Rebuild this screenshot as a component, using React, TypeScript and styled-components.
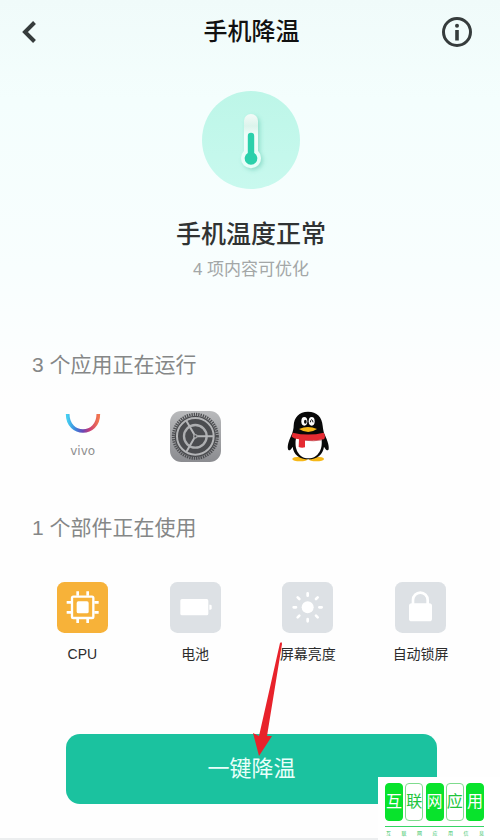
import React from "react";
import styled, { createGlobalStyle } from "styled-components";

const GlobalStyle = createGlobalStyle`
  * { box-sizing: border-box; }
  body {
    margin: 0;
    background: #fff;
    font-family: "Liberation Sans", "Noto Sans CJK SC", sans-serif;
  }
  h1, h2, p, ul { margin: 0; padding: 0; }
`;

const Page = styled.main`
  position: relative;
  min-height: 100vh;
  display: flex;
  flex-direction: column;
  background: linear-gradient(#f0fbfa 0, #f4fefd 100px, #f8fefe 270px, #fefefe 400px);
  border-bottom: 2px solid #eceeef;
`;

const Header = styled.header`
  display: grid;
  grid-template-columns: 32px 1fr 32px;
  align-items: center;
  height: 64px;
  padding: 0 27px 0 14px;
`;

const IconButton = styled.button`
  display: flex;
  align-items: center;
  justify-content: center;
  width: 32px;
  height: 32px;
  padding: 0;
  border: 0;
  background: none;
  color: #363c3c;
  cursor: pointer;
`;

const PageTitle = styled.h1`
  padding-left: 16px;
  font-size: 24px;
  line-height: 32px;
  font-weight: 500;
  text-align: center;
  color: #111;
`;

const Hero = styled.section`
  display: flex;
  flex-direction: column;
  align-items: center;
  padding: 27px 0 0 2px;
`;

const Status = styled.h2`
  margin-top: 27px;
  font-size: 25px;
  line-height: 36px;
  font-weight: 500;
  color: #303333;
`;

const Hint = styled.p`
  margin-top: 6px;
  font-size: 17px;
  line-height: 24px;
  color: #a3a7a7;
`;

const Section = styled.section<{ $top: number }>`
  margin-top: ${(p) => p.$top}px;
`;

const SectionTitle = styled.h2`
  padding-left: 32px;
  font-size: 21px;
  line-height: 30px;
  font-weight: 400;
  color: #858787;
`;

const Tiles = styled.ul<{ $top: number }>`
  display: grid;
  grid-template-columns: repeat(4, 1fr);
  margin-top: ${(p) => p.$top}px;
  padding: 0 23px 0 26px;
  list-style: none;
`;

const Tile = styled.li`
  display: flex;
  flex-direction: column;
  align-items: center;
`;

const TileIcon = styled.svg.attrs({ viewBox: "0 0 153 153" })`
  display: block;
  width: 51px;
  height: 51px;
`;

const TileLabel = styled.span`
  margin-top: 11px;
  font-size: 14px;
  line-height: 20px;
  color: #2c2c2c;
`;

const Action = styled.div`
  position: relative;
  display: flex;
  margin-top: 70px;
  padding: 0 63px 34px 66px;
`;

const CoolButton = styled.button`
  flex: 1;
  height: 70px;
  border: 0;
  border-radius: 14px;
  background: #1bc29f;
  color: #e9fffa;
  font-family: inherit;
  font-size: 22px;
  line-height: 32px;
  cursor: pointer;
`;

const Pointer = styled.svg`
  position: absolute;
  left: 50%;
  top: -93px;
  width: 40px;
  height: 116px;
  pointer-events: none;
`;

const Watermark = styled.aside`
  position: absolute;
  right: 0;
  bottom: -2px;
  width: 122px;
  height: 63px;
  padding: 6px 16px 0 7px;
  background: #fff;
  color: #08e32c;
`;

const Stamps = styled.div`
  display: flex;
  justify-content: space-between;
  padding-bottom: 5px;
  border-bottom: 1px solid #35d565;
`;

const Stamp = styled.span<{ $filled: boolean }>`
  display: flex;
  align-items: center;
  justify-content: center;
  width: 18px;
  height: 38px;
  border: 1px solid ${(p) => (p.$filled ? "#08e32c" : "#7fdc8e")};
  border-radius: 4px;
  background: ${(p) => (p.$filled ? "#08e32c" : "#fff")};
  color: ${(p) => (p.$filled ? "#fff" : "#20c43c")};
  font-size: 16px;
  line-height: 36px;
`;

const Caption = styled.div`
  display: flex;
  justify-content: space-between;
  padding: 2px 0 0 1px;
  font-size: 5px;
  line-height: 8px;
  color: #35c565;
`;

const Thermometer = () => (
  <svg width="98" height="98" viewBox="0 0 98 98" aria-hidden="true">
    <defs>
      <linearGradient id="disc" x1="0" y1="0" x2="0" y2="1">
        <stop offset="0" stopColor="#bdf6e8" />
        <stop offset="1" stopColor="#c8f9ee" />
      </linearGradient>
      <linearGradient id="glass" x1="0" y1="0" x2="0" y2="1">
        <stop offset="0" stopColor="#f4fbf8" />
        <stop offset="0.22" stopColor="#dcf4ec" />
        <stop offset="0.4" stopColor="#f1fdfa" />
        <stop offset="1" stopColor="#e6fff9" />
      </linearGradient>
      <filter id="soft" x="-50%" y="-30%" width="220%" height="170%">
        <feDropShadow dx="2" dy="2" stdDeviation="2" floodColor="#4fbfa5" floodOpacity="0.45" />
      </filter>
    </defs>
    <circle cx="49" cy="49" r="49" fill="url(#disc)" />
    <path
      d="M42 30a7 7 0 0 1 14 0v30a10 10 0 1 1-14 0z"
      fill="url(#glass)"
      filter="url(#soft)"
    />
    <path d="M45.800 45a3.200 3.200 0 0 1 6.400 0v17a6.300 6.300 0 1 1-6.400 0z" fill="#2bd0ab" />
  </svg>
);

const VivoIcon = () => (
  <TileIcon aria-label="vivo" role="img">
    <defs>
      <linearGradient id="smile" x1="0" y1="0" x2="1" y2="0">
        <stop offset="0" stopColor="#45cdf0" />
        <stop offset="0.25" stopColor="#3c86dc" />
        <stop offset="0.5" stopColor="#6a45b5" />
        <stop offset="0.72" stopColor="#c93f75" />
        <stop offset="1" stopColor="#f2744e" />
      </linearGradient>
    </defs>
    <path d="M32 9C32 77 124 77 124 9" fill="none" stroke="url(#smile)" strokeWidth="11" />
    <text x="77" y="132" textAnchor="middle" fontFamily="DejaVu Sans" fontSize="36" fill="#8e8e8e">
      vivo
    </text>
  </TileIcon>
);

const SettingsIcon = () => (
  <TileIcon aria-label="设置" role="img">
    <defs>
      <linearGradient id="metal" x1="0" y1="0" x2="0" y2="1">
        <stop offset="0" stopColor="#b9babc" />
        <stop offset="1" stopColor="#8b8c90" />
      </linearGradient>
    </defs>
    <rect width="153" height="153" rx="34" fill="url(#metal)" />
    <circle cx="76" cy="76" r="66" fill="none" stroke="#4d4e51" strokeWidth="9" strokeDasharray="4 2.910" />
    <circle cx="76" cy="76" r="62" fill="#4b4c4f" />
    <circle cx="76" cy="76" r="55" fill="none" stroke="#b4b5b7" strokeWidth="6" />
    <circle cx="76" cy="76" r="34" fill="none" stroke="#adaeb0" strokeWidth="7" />
    <path d="M76 76H132M76 76L48 27.500M76 76L48 124.500" stroke="#b4b5b7" strokeWidth="6" />
    <circle cx="76" cy="76" r="7" fill="#a2a3a5" />
    <circle cx="76" cy="76" r="3" fill="#4b4c4f" />
  </TileIcon>
);

const QQIcon = () => (
  <TileIcon aria-label="QQ" role="img">
    <ellipse cx="54" cy="144" rx="23" ry="7" fill="#f6b819" />
    <ellipse cx="103" cy="144" rx="23" ry="7" fill="#f6b819" />
    <path
      d="M78 2C51 2 36 19 35 44C35 53 33 58 31 66C23 84 15 101 18 115C20 122 27 116 32 107C34 130 53 145 79 145S123 130 126 107C131 116 138 122 140 115C142 101 134 84 126 66C124 58 123 53 122 44C120 18 105 2 78 2z"
      fill="#090909"
    />
    <path d="M43 77H117C126 112 108 142 79 142S34 112 43 77z" fill="#fff" />
    <path d="M32 65Q79 76 125 65Q132 76 126 85Q98 90 69 87V109Q59 112 50 108L51 85Q36 83 29 77z" fill="#e52b32" />
    <path d="M69 88Q97 91 117 87" fill="none" stroke="#b81922" strokeWidth="2" />
    <ellipse cx="67" cy="31" rx="9" ry="13" fill="#fff" />
    <ellipse cx="89" cy="31" rx="9" ry="13" fill="#fff" />
    <ellipse cx="70" cy="32" rx="4" ry="6" fill="#111" />
    <path d="M85 34Q86 26 89 26T93 34" fill="none" stroke="#111" strokeWidth="3" />
    <path d="M51 54Q78 42 105 54Q79 72 51 54z" fill="#f6b819" />
  </TileIcon>
);

const CpuIcon = () => (
  <TileIcon aria-hidden="true">
    <rect width="153" height="153" rx="22" fill="#f7b239" />
    <g fill="none" stroke="#fff" strokeWidth="7">
      <rect x="45" y="44" width="64" height="64" rx="4" />
      <path
        d="M62 41V28M92 41V28M62 110V123M92 110V123M42 61H29M42 91H29M112 61H125M112 91H125"
        strokeWidth="8"
      />
    </g>
    <rect x="59" y="58" width="36" height="36" rx="5" fill="#fff" />
  </TileIcon>
);

const BatteryIcon = () => (
  <TileIcon aria-hidden="true">
    <rect width="153" height="153" rx="22" fill="#dde1e5" />
    <rect x="31" y="51" width="84" height="49" rx="5" fill="#fff" />
    <path d="M118 68h3q4 0 4 4v7q0 4-4 4h-3z" fill="#fff" />
  </TileIcon>
);

const BrightnessIcon = () => (
  <TileIcon aria-hidden="true">
    <rect width="153" height="153" rx="22" fill="#dde1e5" />
    <circle cx="77" cy="76" r="18" fill="#fff" />
    <path
      d="M77 34V41M77 111V118M35 76H42M112 76H119M47 46L52 51M102 101L107 106M47 106L52 101M102 51L107 46"
      stroke="#fff"
      strokeWidth="8"
      strokeLinecap="round"
    />
  </TileIcon>
);

const LockIcon = () => (
  <TileIcon aria-hidden="true">
    <rect width="153" height="153" rx="22" fill="#dde1e5" />
    <path d="M54 66V54a22 22 0 0 1 44 0V66" fill="none" stroke="#fff" strokeWidth="8" />
    <rect x="42" y="64" width="69" height="54" rx="8" fill="#fff" />
  </TileIcon>
);

const apps = [
  { id: "vivo", Icon: VivoIcon },
  { id: "settings", Icon: SettingsIcon },
  { id: "qq", Icon: QQIcon },
];

const parts = [
  { label: "CPU", Icon: CpuIcon },
  { label: "电池", Icon: BatteryIcon },
  { label: "屏幕亮度", Icon: BrightnessIcon },
  { label: "自动锁屏", Icon: LockIcon },
];

export default function App() {
  return (
    <>
      <GlobalStyle />
      <Page>
        <Header>
          <IconButton aria-label="返回">
            <svg width="32" height="32" viewBox="0 0 32 32" fill="none" stroke="currentColor" strokeWidth="4">
              <path d="M20.500 6.500L11 16L20.500 25.500" />
            </svg>
          </IconButton>
          <PageTitle>手机降温</PageTitle>
          <IconButton aria-label="说明">
            <svg width="32" height="32" viewBox="0 0 32 32">
              <circle cx="16" cy="16" r="13.500" fill="none" stroke="currentColor" strokeWidth="3" />
              <circle cx="16" cy="9.700" r="2" fill="currentColor" />
              <path d="M16 14V24.500" stroke="currentColor" strokeWidth="3.600" />
            </svg>
          </IconButton>
        </Header>
        <Hero>
          <Thermometer />
          <Status>手机温度正常</Status>
          <Hint>4 项内容可优化</Hint>
        </Hero>
        <Section $top={68}>
          <SectionTitle>3 个应用正在运行</SectionTitle>
          <Tiles $top={31}>
            {apps.map(({ id, Icon }) => (
              <Tile key={id}>
                <Icon />
              </Tile>
            ))}
          </Tiles>
        </Section>
        <Section $top={51}>
          <SectionTitle>1 个部件正在使用</SectionTitle>
          <Tiles $top={39}>
            {parts.map(({ label, Icon }) => (
              <Tile key={label}>
                <Icon />
                <TileLabel>{label}</TileLabel>
              </Tile>
            ))}
          </Tiles>
        </Section>
        <Action>
          <CoolButton>一键降温</CoolButton>
          <Pointer viewBox="0 0 40 116" aria-hidden="true">
            <path d="M30 2Q32 0 32 3L17 95L22 95L9 115L3 92L9 95z" fill="#e8222b" />
          </Pointer>
        </Action>
        <Watermark>
          <Stamps>
            {[..."互联网应用"].map((char, i) => (
              <Stamp key={char} $filled={i % 2 === 0}>
                {char}
              </Stamp>
            ))}
          </Stamps>
          <Caption>
            {[..."互联网应用信息"].map((char) => (
              <span key={char}>{char}</span>
            ))}
          </Caption>
        </Watermark>
      </Page>
    </>
  );
}
